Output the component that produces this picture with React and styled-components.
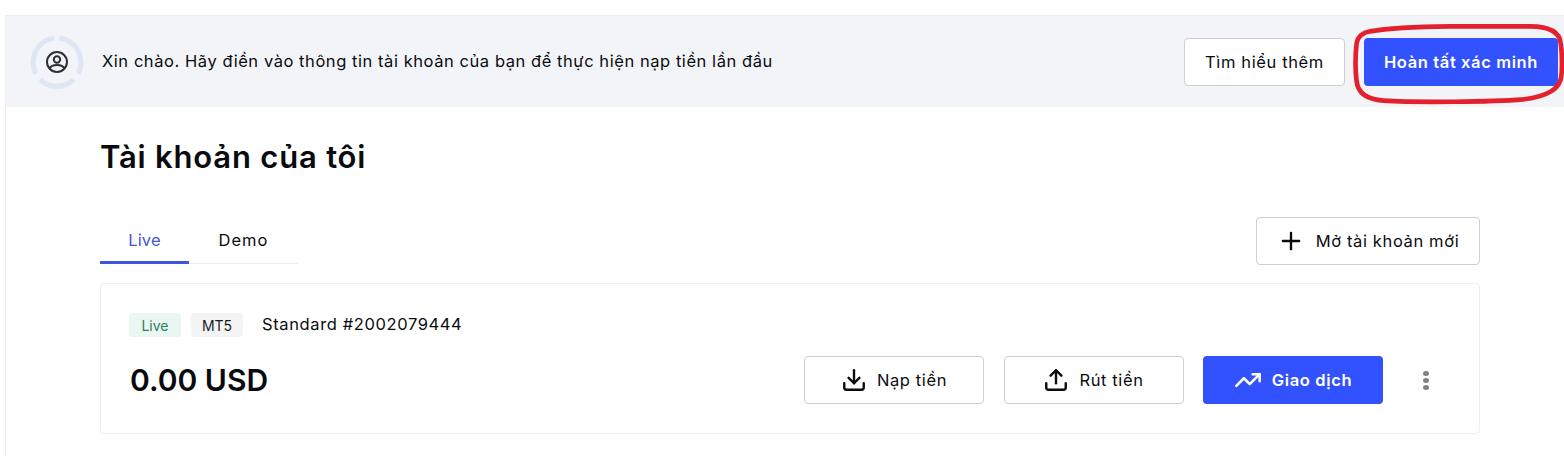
import styled, { createGlobalStyle } from "styled-components";
import { Download, Upload, TrendingUp, Plus } from "lucide-react";

const GlobalStyle = createGlobalStyle`
  html, body {
    margin: 0;
    padding: 0;
    background: #fff;
    font-family: "Inter", "Noto Sans", sans-serif;
    color: #0b0b0f;
  }
  * {
    box-sizing: border-box;
  }
`;

const Page = styled.div`
  position: relative;
  width: 1564px;
  height: 456px;
  overflow: hidden;
  padding: 15px 0 0 5px;
`;

const Frame = styled.div`
  border-top: 1px solid #e9ebee;
  border-left: 1px solid #eceef0;
  height: 100%;
`;

const Banner = styled.div`
  height: 91px;
  background: #f2f4f8;
  display: flex;
  align-items: center;
  padding: 0 6px 0 24px;
`;

const BannerText = styled.p`
  flex: 1;
  margin: 0 0 2px 18px;
  font-size: 16.5px;
  letter-spacing: 0.56px;
`;

const BannerActions = styled.div`
  display: flex;
  gap: 19px;
`;

const Button = styled.button`
  height: 48px;
  width: ${(props) => props.$width}px;
  display: flex;
  align-items: center;
  justify-content: center;
  gap: ${(props) => props.$gap || 10}px;
  border-radius: 4px;
  font-family: inherit;
  font-size: 16.5px;
  letter-spacing: 0.62px;
  font-weight: ${(props) => (props.$primary ? 600 : 400)};
  color: ${(props) => (props.$primary ? "#fff" : "#0b0b0f")};
  background: ${(props) => (props.$primary ? "#3352ff" : "#fff")};
  border: ${(props) => (props.$primary ? "none" : "1px solid #cfcfcf")};
  padding: 0;
`;

const Content = styled.div`
  padding: 0 84px 0 94px;
`;

const Title = styled.h1`
  margin: 30px 0 40px;
  font-size: 31px;
  line-height: 40px;
  font-weight: 600;
  letter-spacing: 0.8px;
`;

const TabRow = styled.div`
  display: flex;
  justify-content: space-between;
  align-items: flex-start;
  margin-bottom: 18px;
`;

const Tabs = styled.div`
  display: flex;
  width: 198px;
  height: 47px;
  border-bottom: 1px solid #eeeff1;
`;

const Tab = styled.div`
  width: ${(props) => props.$width}px;
  height: 47px;
  display: flex;
  align-items: center;
  justify-content: center;
  padding-top: 1px;
  font-size: 16.5px;
  letter-spacing: ${(props) => (props.$active ? "0.1px" : "1px")};
  color: ${(props) => (props.$active ? "#3f57e0" : "#0b0b0f")};
  border-bottom: 3px solid ${(props) => (props.$active ? "#3f57e0" : "transparent")};
`;

const Card = styled.div`
  height: 151px;
  border: 1px solid #eeeff1;
  border-radius: 4px;
  padding: 29px 28px 0;
`;

const CardHead = styled.div`
  display: flex;
  align-items: center;
  gap: 10px;
  height: 24px;
`;

const Badge = styled.span`
  width: 52px;
  height: 24px;
  display: flex;
  align-items: center;
  justify-content: center;
  border-radius: 4px;
  font-size: 14px;
  background: ${(props) => (props.$live ? "#e9f6f2" : "#f4f4f5")};
  color: ${(props) => (props.$live ? "#2f8062" : "#1b1b1f")};
`;

const AccountName = styled.span`
  margin: 0 0 2px 9px;
  font-size: 16.5px;
  letter-spacing: 0.62px;
`;

const CardBody = styled.div`
  display: flex;
  align-items: center;
  margin-top: 19px;
`;

const Amount = styled.div`
  flex: 1;
  margin-left: 1px;
  font-size: 30px;
  font-weight: 600;
`;

const CardActions = styled.div`
  display: flex;
  align-items: center;
  gap: 19.5px;
`;

const MoreButton = styled.div`
  width: 6px;
  display: flex;
  flex-direction: column;
  gap: 2px;
  margin: 0 22px 0 40px;
`;

const Dot = styled.span`
  width: 6px;
  height: 5px;
  border-radius: 50%;
  background: #808080;
`;

// red marker drawn over the screenshot by hand
const Annotation = styled.svg`
  position: absolute;
  left: 1350px;
  top: 18px;
  width: 214px;
  height: 90px;
`;

const ProfileRing = () => (
  <svg width="54" height="54" viewBox="0 0 54 54" fill="none">
    <g stroke="#dfe6f3" strokeWidth="5">
      <path d="M24.6 3.1A24.5 24.5 0 0 0 5.8 38.5" />
      <path d="M29.4 3.1A24.5 24.5 0 0 1 48.2 38.5" />
      <path d="M10.2 44.6A24.5 24.5 0 0 0 43.8 44.6" />
    </g>
    <g stroke="#2e2e33" strokeWidth="2">
      <circle cx="27" cy="27" r="10" />
      <circle cx="27" cy="24.5" r="3.2" />
      <path d="M19.5 33.5C21 30.5 24 30 27 30s6 .5 7.5 3.5" />
    </g>
  </svg>
);

const App = () => {
  return (
    <Page>
      <GlobalStyle />
      <Frame>
        <Banner>
          <ProfileRing />
          <BannerText>
            Xin chào. Hãy điền vào thông tin tài khoản của bạn để thực hiện nạp tiền lần đầu
          </BannerText>
          <BannerActions>
            <Button $width={161}>Tìm hiểu thêm</Button>
            <Button $width={194} $primary>
              Hoàn tất xác minh
            </Button>
          </BannerActions>
        </Banner>
        <Content>
          <Title>Tài khoản của tôi</Title>
          <TabRow>
            <Tabs>
              <Tab $width={89} $active>
                Live
              </Tab>
              <Tab $width={109}>Demo</Tab>
            </Tabs>
            <Button $width={224} $gap={11}>
              <Plus size={28} strokeWidth={2} />
              Mở tài khoản mới
            </Button>
          </TabRow>
          <Card>
            <CardHead>
              <Badge $live>Live</Badge>
              <Badge>MT5</Badge>
              <AccountName>Standard #2002079444</AccountName>
            </CardHead>
            <CardBody>
              <Amount>0.00 USD</Amount>
              <CardActions>
                <Button $width={180}>
                  <Download size={26} strokeWidth={2.2} />
                  Nạp tiền
                </Button>
                <Button $width={180}>
                  <Upload size={26} strokeWidth={2.2} />
                  Rút tiền
                </Button>
                <Button $width={180} $primary>
                  <TrendingUp size={28} strokeWidth={2.2} />
                  Giao dịch
                </Button>
              </CardActions>
              <MoreButton>
                <Dot />
                <Dot />
                <Dot />
              </MoreButton>
            </CardBody>
          </Card>
        </Content>
      </Frame>
      <Annotation viewBox="0 0 642 270" fill="none">
        <path
          d="M60 40C130 28 220 26 300 25L540 25C590 25 628 38 632 75C636 100 637 150 634 175C630 215 590 236 520 244C420 252 200 254 100 248C60 245 24 232 20 190C16 160 16 110 20 75C24 55 40 44 60 40Z"
          stroke="#e3202d"
          strokeWidth="14"
        />
      </Annotation>
    </Page>
  );
};

export default App;
